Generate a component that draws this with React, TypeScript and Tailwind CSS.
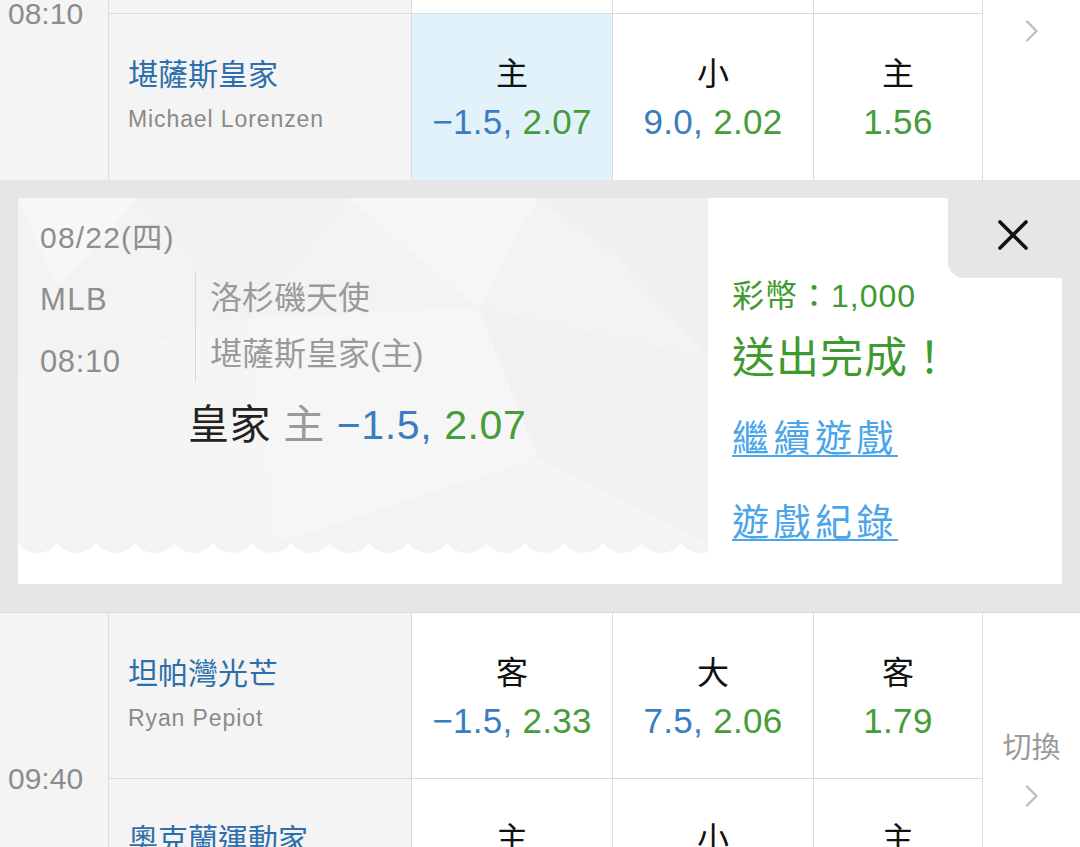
import React from "react";

type Cell = { label: string; a?: string; b: string; hl?: boolean };
type Row = { team: string; pitcher: string; cells: Cell[] };

function Chevron() {
  return (
    <svg width="14" height="22" viewBox="0 0 14 22">
      <polyline points="2,1.5 11.5,11 2,20.5" fill="none" stroke="#bdbdbd" strokeWidth="2.2" strokeLinecap="round" strokeLinejoin="round" />
    </svg>
  );
}

function OddsCell({ c, w }: { c: Cell; w: string }) {
  return (
    <div className={`${w} border-r border-[#d5dce3] flex flex-col items-center pt-[40px] ${c.hl ? "bg-[#e1f2fb]" : "bg-white"}`}>
      <div className="text-[32px] leading-[40px] text-[#111]">{c.label}</div>
      <div className="mt-[8px] text-[35px] leading-[40px] tracking-[0.3px] whitespace-nowrap">
        {c.a ? <span className="text-[#3b7cc3]">{c.a}, </span> : null}
        <span className="text-[#469c39]">{c.b}</span>
      </div>
    </div>
  );
}

function Block({ time, rows }: { time: string; rows: Row[] }) {
  return (
    <div className="flex h-[332px] shrink-0">
      <div className="w-[109px] shrink-0 border-r border-[#d5dce3] bg-[#f4f4f4] flex items-center pl-[8px] text-[30px] leading-[40px] text-[#8c8c8c]">
        {time}
      </div>
      <div className="w-[874px] shrink-0 flex flex-col">
        {rows.map((r, i) => (
          <div key={i} className={`flex h-[166px] shrink-0 ${i === 0 ? "border-b border-[#d5dce3]" : ""}`}>
            <div className="w-[303px] shrink-0 border-r border-[#d5dce3] bg-[#f4f4f4] pl-[19px] pt-[41px] flex flex-col">
              <div className="text-[30px] leading-[40px] text-[#2d6fab]">{r.team}</div>
              <div className="mt-[9px] text-[23px] leading-[30px] tracking-[0.9px] text-[#8a8a8a]">{r.pitcher}</div>
            </div>
            <OddsCell c={r.cells[0]} w="w-[201px]" />
            <OddsCell c={r.cells[1]} w="w-[201px]" />
            <OddsCell c={r.cells[2]} w="w-[169px]" />
          </div>
        ))}
      </div>
      <div className="flex-1 bg-white flex flex-col items-center justify-center pb-[23px]">
        <div className="text-[29px] leading-[40px] text-[#9a9a9a]">切換</div>
        <div className="mt-[17px] h-[22px]">
          <Chevron />
        </div>
      </div>
    </div>
  );
}

function Scallops() {
  const arcs = [];
  for (let i = 0; i < 18; i++) {
    const x = i * 39;
    arcs.push(<path key={i} d={`M${x} 0 A24 24 0 0 0 ${x + 39} 0 Z`} fill="#f3f3f3" />);
  }
  return (
    <svg width="690" height="13" viewBox="0 0 690 13" className="block">
      {arcs}
    </svg>
  );
}

function TicketPattern() {
  return (
    <svg className="absolute inset-0" width="690" height="345" viewBox="0 0 690 345">
      <polygon points="0,0 120,0 40,90" fill="#f7f7f7" />
      <polygon points="120,0 330,0 230,120" fill="#f1f1f1" />
      <polygon points="330,0 520,0 460,110" fill="#f6f6f6" />
      <polygon points="520,0 690,0 690,160 600,60" fill="#f0f0f0" />
      <polygon points="0,180 230,120 260,345 0,345" fill="#f5f5f5" />
      <polygon points="230,120 460,110 520,260 260,345" fill="#f6f6f6" />
      <polygon points="460,110 690,160 690,345 520,260" fill="#f1f1f1" />
      <polygon points="520,260 690,345 400,345" fill="#f5f5f5" />
    </svg>
  );
}

function Ticket() {
  return (
    <div className="w-[690px] shrink-0 flex flex-col">
      <div className="relative h-[345px] bg-[#f3f3f3]">
        <TicketPattern />
        <div className="relative pl-[22px] pt-[22px] flex flex-col">
          <div className="text-[30px] leading-[36px] text-[#8e8e8e] tracking-[1.2px]">08/22(四)</div>
          <div className="mt-[16px] flex">
            <div className="w-[155px] shrink-0 pt-[10px] flex flex-col text-[31px] leading-[36px] text-[#8e8e8e]">
              <div className="tracking-[1.5px]">MLB</div>
              <div className="mt-[26px] tracking-[0.6px]">08:10</div>
            </div>
            <div className="w-px h-[110px] bg-[#dadada]" />
            <div className="pl-[14px] pt-[6px] flex flex-col text-[32px] leading-[40px] text-[#9a9a9a]">
              <div>洛杉磯天使</div>
              <div className="mt-[16px]">堪薩斯皇家(主)</div>
            </div>
          </div>
          <div className="mt-[18px] ml-[148px] text-[41px] leading-[50px] tracking-[0.6px] whitespace-nowrap">
            <span className="text-[#222]">皇家 </span>
            <span className="text-[#9a9a9a]">主 </span>
            <span className="text-[#3b7cc3]">−1.5, </span>
            <span className="text-[#469c39]">2.07</span>
          </div>
        </div>
      </div>
      <Scallops />
    </div>
  );
}

function CloseIcon() {
  return (
    <svg width="32" height="32" viewBox="0 0 32 32">
      <path d="M3 3 L29 29 M29 3 L3 29" stroke="#111" strokeWidth="3.6" strokeLinecap="round" />
    </svg>
  );
}

function Result() {
  return (
    <div className="flex-1 flex flex-col bg-white">
      <div className="h-[80px] flex justify-end">
        <div className="w-[114px] h-full bg-[#e6e6e6] rounded-bl-[16px] flex items-center justify-center pl-[16px] pb-[6px]">
          <CloseIcon />
        </div>
      </div>
      <div className="pl-[24px] flex flex-col">
        <div className="text-[32px] leading-[36px] tracking-[1px] text-[#3f9a2f] whitespace-nowrap">彩幣：1,000</div>
        <div className="mt-[19px] text-[43px] leading-[50px] tracking-[1px] text-[#3f9a2f] whitespace-nowrap">送出完成！</div>
        <div className="mt-[32px] text-[37px] leading-[50px] tracking-[4.5px] text-[#4aa5ea] underline decoration-[2px] underline-offset-[3px] whitespace-nowrap">
          繼續遊戲
        </div>
        <div className="mt-[34px] text-[37px] leading-[50px] tracking-[4.5px] text-[#4aa5ea] underline decoration-[2px] underline-offset-[3px] whitespace-nowrap">
          遊戲紀錄
        </div>
      </div>
    </div>
  );
}

export default function App() {
  const topRows: Row[] = [
    {
      team: "洛杉磯天使",
      pitcher: "Griffin Canning",
      cells: [
        { label: "客", a: "+1.5", b: "1.65" },
        { label: "大", a: "9.0", b: "1.72" },
        { label: "客", b: "2.30" },
      ],
    },
    {
      team: "堪薩斯皇家",
      pitcher: "Michael Lorenzen",
      cells: [
        { label: "主", a: "−1.5", b: "2.07", hl: true },
        { label: "小", a: "9.0", b: "2.02" },
        { label: "主", b: "1.56" },
      ],
    },
  ];
  const bottomRows: Row[] = [
    {
      team: "坦帕灣光芒",
      pitcher: "Ryan Pepiot",
      cells: [
        { label: "客", a: "−1.5", b: "2.33" },
        { label: "大", a: "7.5", b: "2.06" },
        { label: "客", b: "1.79" },
      ],
    },
    {
      team: "奧克蘭運動家",
      pitcher: "JP Sears",
      cells: [
        { label: "主", a: "+1.5", b: "1.55" },
        { label: "小", a: "7.5", b: "1.68" },
        { label: "主", b: "1.95" },
      ],
    },
  ];
  return (
    <div className="w-[1080px] h-[847px] overflow-hidden bg-white font-['Liberation_Sans','Noto_Sans_CJK_TC',sans-serif]">
      <div className="h-[180px] overflow-hidden flex flex-col justify-end">
        <Block time="08:10" rows={topRows} />
      </div>
      <div className="bg-[#e6e6e6] px-[18px] pt-[18px] pb-[28px]">
        <div className="h-[386px] flex bg-white">
          <Ticket />
          <Result />
        </div>
      </div>
      <div className="border-t border-[#d5dce3]">
        <Block time="09:40" rows={bottomRows} />
      </div>
    </div>
  );
}
